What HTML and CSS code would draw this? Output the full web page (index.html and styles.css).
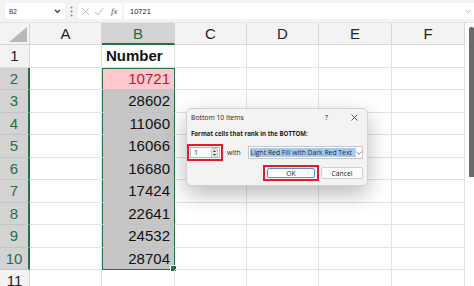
FILE: index.html
```html
<!DOCTYPE html>
<html lang="en">
<head>
  <meta charset="UTF-8" />
  <title>Bottom 10 Items</title>
  <link rel="stylesheet" href="styles.css">
</head>
<body>
  <div class="app">
    <div class="formula-bar">
      <div class="name-box">
        <span>B2</span>
        <svg width="7" height="5" viewBox="0 0 7 5"><path d="M1 1l2.5 2.5L6 1" fill="none" stroke="#333" stroke-width="1.2"/></svg>
      </div>
      <div class="dots">
        <svg width="3" height="11" viewBox="0 0 3 11"><circle cx="1.5" cy="1.5" r="1" fill="#888"/><circle cx="1.5" cy="5.5" r="1" fill="#888"/><circle cx="1.5" cy="9.5" r="1" fill="#888"/></svg>
      </div>
      <div class="fx-box">
        <svg width="9" height="9" viewBox="0 0 9 9"><path d="M1 1l7 7M8 1l-7 7" stroke="#bdbdbd" stroke-width="1"/></svg>
        <svg width="10" height="9" viewBox="0 0 10 9"><path d="M1 5l3 3 5-7" fill="none" stroke="#bdbdbd" stroke-width="1"/></svg>
        <span class="fx">fx</span>
      </div>
      <div class="formula-input">
        <span>10721</span>
        <svg width="7" height="5" viewBox="0 0 7 5"><path d="M1 1l2.5 2.5L6 1" fill="none" stroke="#aaa" stroke-width="0.8"/></svg>
      </div>
    </div>

    <div class="sheet-wrap">
      <div class="sheet">
        <div class="row head-row">
          <div class="corner"><svg width="18" height="15" viewBox="0 0 18 15"><path d="M18 0V15H0Z" fill="#b9b9b9"/></svg></div>
          <div class="col-head">A</div>
          <div class="col-head active">B</div>
          <div class="col-head">C</div>
          <div class="col-head">D</div>
          <div class="col-head">E</div>
          <div class="col-head">F</div>
        </div>
        <div class="row">
          <div class="row-head">1</div>
          <div class="cell"></div>
          <div class="cell title">Number</div>
          <div class="cell"></div><div class="cell"></div><div class="cell"></div><div class="cell"></div>
        </div>
        <div class="row">
          <div class="row-head active">2</div>
          <div class="cell"></div>
          <div class="cell num sel first bad">10721</div>
          <div class="cell"></div><div class="cell"></div><div class="cell"></div><div class="cell"></div>
        </div>
        <div class="row">
          <div class="row-head active">3</div>
          <div class="cell"></div>
          <div class="cell num sel">28602</div>
          <div class="cell"></div><div class="cell"></div><div class="cell"></div><div class="cell"></div>
        </div>
        <div class="row">
          <div class="row-head active">4</div>
          <div class="cell"></div>
          <div class="cell num sel">11060</div>
          <div class="cell"></div><div class="cell"></div><div class="cell"></div><div class="cell"></div>
        </div>
        <div class="row">
          <div class="row-head active">5</div>
          <div class="cell"></div>
          <div class="cell num sel">16066</div>
          <div class="cell"></div><div class="cell"></div><div class="cell"></div><div class="cell"></div>
        </div>
        <div class="row">
          <div class="row-head active">6</div>
          <div class="cell"></div>
          <div class="cell num sel">16680</div>
          <div class="cell"></div><div class="cell"></div><div class="cell"></div><div class="cell"></div>
        </div>
        <div class="row">
          <div class="row-head active">7</div>
          <div class="cell"></div>
          <div class="cell num sel">17424</div>
          <div class="cell"></div><div class="cell"></div><div class="cell"></div><div class="cell"></div>
        </div>
        <div class="row">
          <div class="row-head active">8</div>
          <div class="cell"></div>
          <div class="cell num sel">22641</div>
          <div class="cell"></div><div class="cell"></div><div class="cell"></div><div class="cell"></div>
        </div>
        <div class="row">
          <div class="row-head active">9</div>
          <div class="cell"></div>
          <div class="cell num sel">24532</div>
          <div class="cell"></div><div class="cell"></div><div class="cell"></div><div class="cell"></div>
        </div>
        <div class="row">
          <div class="row-head active">10</div>
          <div class="cell"></div>
          <div class="cell num sel last">28704</div>
          <div class="cell"></div><div class="cell"></div><div class="cell"></div><div class="cell"></div>
        </div>
        <div class="row">
          <div class="row-head">11</div>
          <div class="cell"></div><div class="cell"></div><div class="cell"></div><div class="cell"></div><div class="cell"></div><div class="cell"></div>
        </div>
      </div>
      <div class="scrollbar"><div class="thumb"></div></div>
    </div>

    <div class="dialog">
      <div class="dlg-title">
        <span>Bottom 10 Items</span>
        <span class="dlg-icons">
          <span class="help">?</span>
          <svg width="7" height="7" viewBox="0 0 7 7"><path d="M.5 .5l6 6M6.5 .5l-6 6" stroke="#333" stroke-width="0.8"/></svg>
        </span>
      </div>
      <div class="dlg-label">Format cells that rank in the BOTTOM:</div>
      <div class="dlg-controls">
        <div class="mark spin-mark">
          <div class="spin">
            <span>1</span>
            <svg width="7" height="10" viewBox="0 0 7 10"><rect x="0.5" y="0.5" width="6" height="9" rx="1" fill="#e6e6e6" stroke="#999" stroke-width="0.5"/><path d="M1.8 4L3.5 2.2 5.2 4ZM1.8 6L3.5 7.8 5.2 6Z" fill="#444"/></svg>
          </div>
        </div>
        <span class="with">with</span>
        <div class="select">
          <span class="sel-text">Light Red Fill with Dark Red Text</span>
          <span class="sel-arrow"><svg width="6" height="4" viewBox="0 0 6 4"><path d="M.5 .8L3 3.2 5.5 .8" fill="none" stroke="#666" stroke-width="0.8"/></svg></span>
        </div>
      </div>
      <div class="dlg-buttons">
        <div class="mark ok-mark"><div class="btn primary">OK</div></div>
        <div class="btn">Cancel</div>
      </div>
    </div>
  </div>
</body>
</html>
```

FILE: styles.css
```css
* {
  box-sizing: border-box;
}
body {
  margin: 0;
  background: #fff;
  color: #1e1e1e;
  font-family: "Liberation Sans", Arial, sans-serif;
}
.app {
  position: relative;
  width: 474px;
  height: 286px;
  overflow: hidden;
}

/* formula bar */
.formula-bar {
  height: 23px;
  display: flex;
  align-items: center;
  padding-left: 5px;
  background: #f3f3f3;
  border-bottom: 1px solid #e4e4e4;
}
.name-box {
  width: 60px;
  height: 16px;
  display: flex;
  align-items: center;
  justify-content: space-between;
  padding: 0 4px;
  background: #fff;
  border-radius: 3px;
  font-size: 6.5px;
  color: #333;
}
.dots {
  width: 13px;
  display: flex;
  justify-content: center;
}
.fx-box {
  width: 44px;
  height: 16px;
  display: flex;
  align-items: center;
  gap: 4px;
  padding-left: 3px;
  background: #fff;
  border-radius: 3px;
}
.fx {
  font-family: "Liberation Serif", serif;
  font-style: italic;
  font-size: 9px;
  color: #555;
  margin-left: 3px;
}
.formula-input {
  flex: 1;
  height: 16px;
  margin-left: 2px;
  display: flex;
  align-items: center;
  justify-content: space-between;
  padding: 0 2px 0 6px;
  background: #fff;
  font-size: 7.5px;
  color: #222;
}

/* sheet */
.sheet-wrap {
  display: flex;
}
.sheet {
  width: 465px;
}
.row {
  display: grid;
  grid-template-columns: 30px 72px 73px 72px 72px 73px 73px;
  height: 22.5px;
}
.head-row {
  height: 22px;
  background: #f3f3f3;
}
.corner {
  display: flex;
  align-items: flex-end;
  justify-content: flex-end;
  padding: 0 2px 2px 0;
  border-right: 1px solid #d6d6d6;
  border-bottom: 1px solid #d6d6d6;
}
.col-head {
  display: flex;
  align-items: center;
  justify-content: center;
  font-size: 15px;
  color: #222;
  border-right: 1px solid #d6d6d6;
  border-bottom: 1px solid #d6d6d6;
}
.col-head.active {
  background: #d3d3d3;
  color: #1f6e47;
  border-bottom: 2px solid #217346;
}
.row-head {
  display: flex;
  align-items: center;
  justify-content: center;
  font-size: 15px;
  color: #222;
  background: #f3f3f3;
  border-right: 1px solid #d6d6d6;
  border-bottom: 1px solid #dcdcdc;
}
.row-head.active {
  background: #d3d3d3;
  color: #2b6d4b;
  border-right: 2px solid #217346;
  border-bottom-color: #c4c4c4;
}
.cell {
  position: relative;
  display: flex;
  align-items: center;
  padding: 0 4px;
  font-size: 15px;
  color: #111;
  border-right: 1px solid #e2e2e2;
  border-bottom: 1px solid #e2e2e2;
}
.cell.title {
  font-weight: bold;
}
.cell.num {
  justify-content: flex-end;
}
.cell.sel {
  background: #c6c6c6;
  border-bottom-color: #c2c2c2;
  border-right: 1px solid #217346;
  box-shadow: inset 1px 0 0 #217346;
}
.cell.sel.first {
  box-shadow: inset 1px 0 0 #217346, inset 0 1px 0 #217346;
}
.cell.sel.last {
  border-bottom: 1px solid #217346;
}
.cell.sel.last::after {
  content: "";
  position: absolute;
  right: -3px;
  bottom: -3px;
  width: 5px;
  height: 5px;
  background: #217346;
  border: 1px solid #fff;
}
.cell.bad {
  background: #ffc7ce;
  color: #b51c3b;
}
.scrollbar {
  width: 9px;
  height: 263px;
  padding: 4px 0 0 4px;
  background: #fff;
}
.thumb {
  width: 5px;
  height: 150px;
  background: #6a6a6a;
  border-radius: 2px 2px 0 0;
}

/* dialog */
.dialog {
  position: absolute;
  left: 186px;
  top: 108px;
  width: 182px;
  height: 78px;
  background: #f3f3f3;
  border: 1px solid #d2d2d2;
  border-radius: 5px;
  box-shadow: 0 8px 22px rgba(0, 0, 0, 0.28);
  font-family: "Open Sans", "Liberation Sans", sans-serif;
  color: #1b1b1b;
}
.dlg-title {
  height: 17px;
  display: flex;
  align-items: center;
  justify-content: space-between;
  padding: 0 9px 0 4px;
  font-size: 6.8px;
}
.dlg-icons {
  display: flex;
  align-items: center;
  gap: 23px;
}
.help {
  font-size: 7px;
}
.dlg-label {
  height: 14px;
  display: flex;
  align-items: center;
  padding-left: 4px;
  font-size: 6.1px;
  font-weight: bold;
}
.dlg-controls {
  display: flex;
  align-items: center;
  margin-top: 4px;
  height: 17px;
}
.mark {
  border: 2px solid #e01c24;
}
.spin-mark {
  width: 36px;
  height: 17px;
  padding: 1px;
}
.spin {
  height: 100%;
  display: flex;
  align-items: center;
  justify-content: space-between;
  padding: 0 1px 0 3px;
  background: #fff;
  border: 1px solid #b9b9b9;
  font-size: 7px;
}
.with {
  margin-left: 4px;
  font-size: 6.8px;
}
.select {
  margin-left: 7px;
  width: 115px;
  height: 13px;
  display: flex;
  align-items: center;
  padding-left: 1px;
  background: #fff;
  border: 1px solid #c6c6c6;
}
.sel-text {
  width: 105px;
  height: 9px;
  line-height: 9px;
  padding-left: 1px;
  background: #a7c8ec;
  font-size: 6.8px;
  white-space: nowrap;
  overflow: hidden;
  color: #1a2b40;
}
.sel-arrow {
  flex: 1;
  display: flex;
  justify-content: center;
  border-left: 1px solid #d8d8d8;
  height: 100%;
  align-items: center;
}
.dlg-buttons {
  display: flex;
  justify-content: flex-end;
  align-items: center;
  gap: 2px;
  margin-top: 4px;
  padding-right: 4px;
}
.ok-mark {
  width: 56px;
  height: 16px;
  padding: 1px 2px;
}
.btn {
  display: flex;
  align-items: center;
  justify-content: center;
  width: 42px;
  height: 12px;
  background: #fbfbfb;
  border: 1px solid #d0d0d0;
  border-radius: 2px;
  font-size: 6.8px;
}
.btn.primary {
  width: 100%;
  height: 100%;
  background: #fff;
  border-color: #5b8fd0;
}
```
